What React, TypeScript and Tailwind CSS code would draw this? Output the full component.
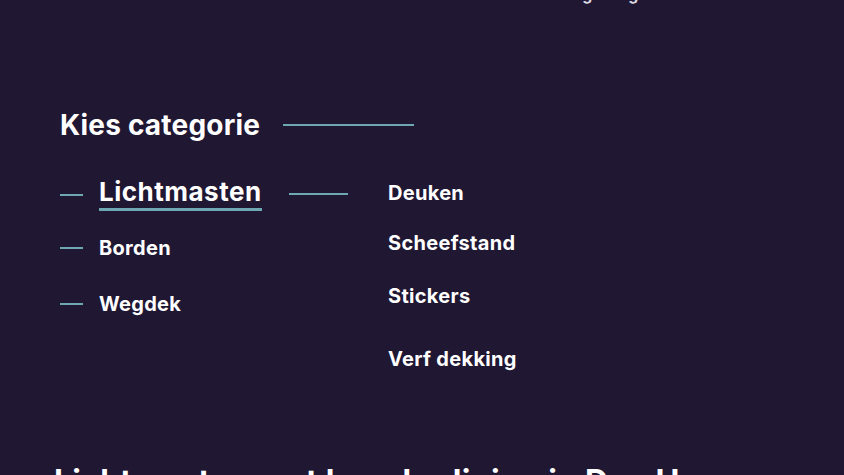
export default function App() {
  const font = { fontFamily: 'Inter, "Noto Sans", sans-serif' };
  return (
    <div className="w-full h-[475px] overflow-hidden bg-[#201733] text-white" style={font}>
      <div className="h-[4px] overflow-hidden pl-[554px]">
        <div className="-mt-[14px] text-[16px] leading-[16px] font-bold text-[#d9d6e0] tracking-[0.6px]">Omgeving</div>
      </div>
      <div className="px-[60px]">
        <div className="mt-[107px] flex items-center">
          <h2 className="text-[28px] leading-[28px] font-bold tracking-[0.2px]">Kies categorie</h2>
          <div className="ml-[23px] h-[2px] w-[131px] bg-[#6ea8b2]" />
        </div>
        <div className="flex">
          <div className="flex w-[328px] flex-col">
            <div className="mt-[40px] flex items-center">
              <div className="h-[2px] w-[23px] bg-[#6ea8b2]" />
              <span className="ml-[16px] border-b-[3px] border-[#6ea8b2] pb-[3px] text-[26px] leading-[26px] font-bold tracking-[0.5px]">
                Lichtmasten
              </span>
              <div className="mb-[3px] ml-[27px] h-[2px] w-[59px] bg-[#6ea8b2]" />
            </div>
            <div className="mt-[27px] flex items-center">
              <div className="h-[2px] w-[23px] bg-[#6ea8b2]" />
              <span className="ml-[16px] text-[20px] leading-[20px] font-bold tracking-[0.3px]">Borden</span>
            </div>
            <div className="mt-[36px] flex items-center">
              <div className="h-[2px] w-[23px] bg-[#6ea8b2]" />
              <span className="ml-[16px] text-[20px] leading-[20px] font-bold tracking-[0.3px]">Wegdek</span>
            </div>
          </div>
          <div className="flex flex-col text-[20px] leading-[20px] font-bold tracking-[0.3px]">
            <span className="mt-[44px]">Deuken</span>
            <span className="mt-[30px]">Scheefstand</span>
            <span className="mt-[33px]">Stickers</span>
            <span className="mt-[43px]">Verf dekking</span>
          </div>
        </div>
        <h1 className="ml-[-6px] mt-[97px] text-[32px] leading-[32px] font-bold whitespace-nowrap tracking-[0.2px]">
          Lichtmasten met beschadiging in Den Haag
        </h1>
      </div>
    </div>
  );
}
